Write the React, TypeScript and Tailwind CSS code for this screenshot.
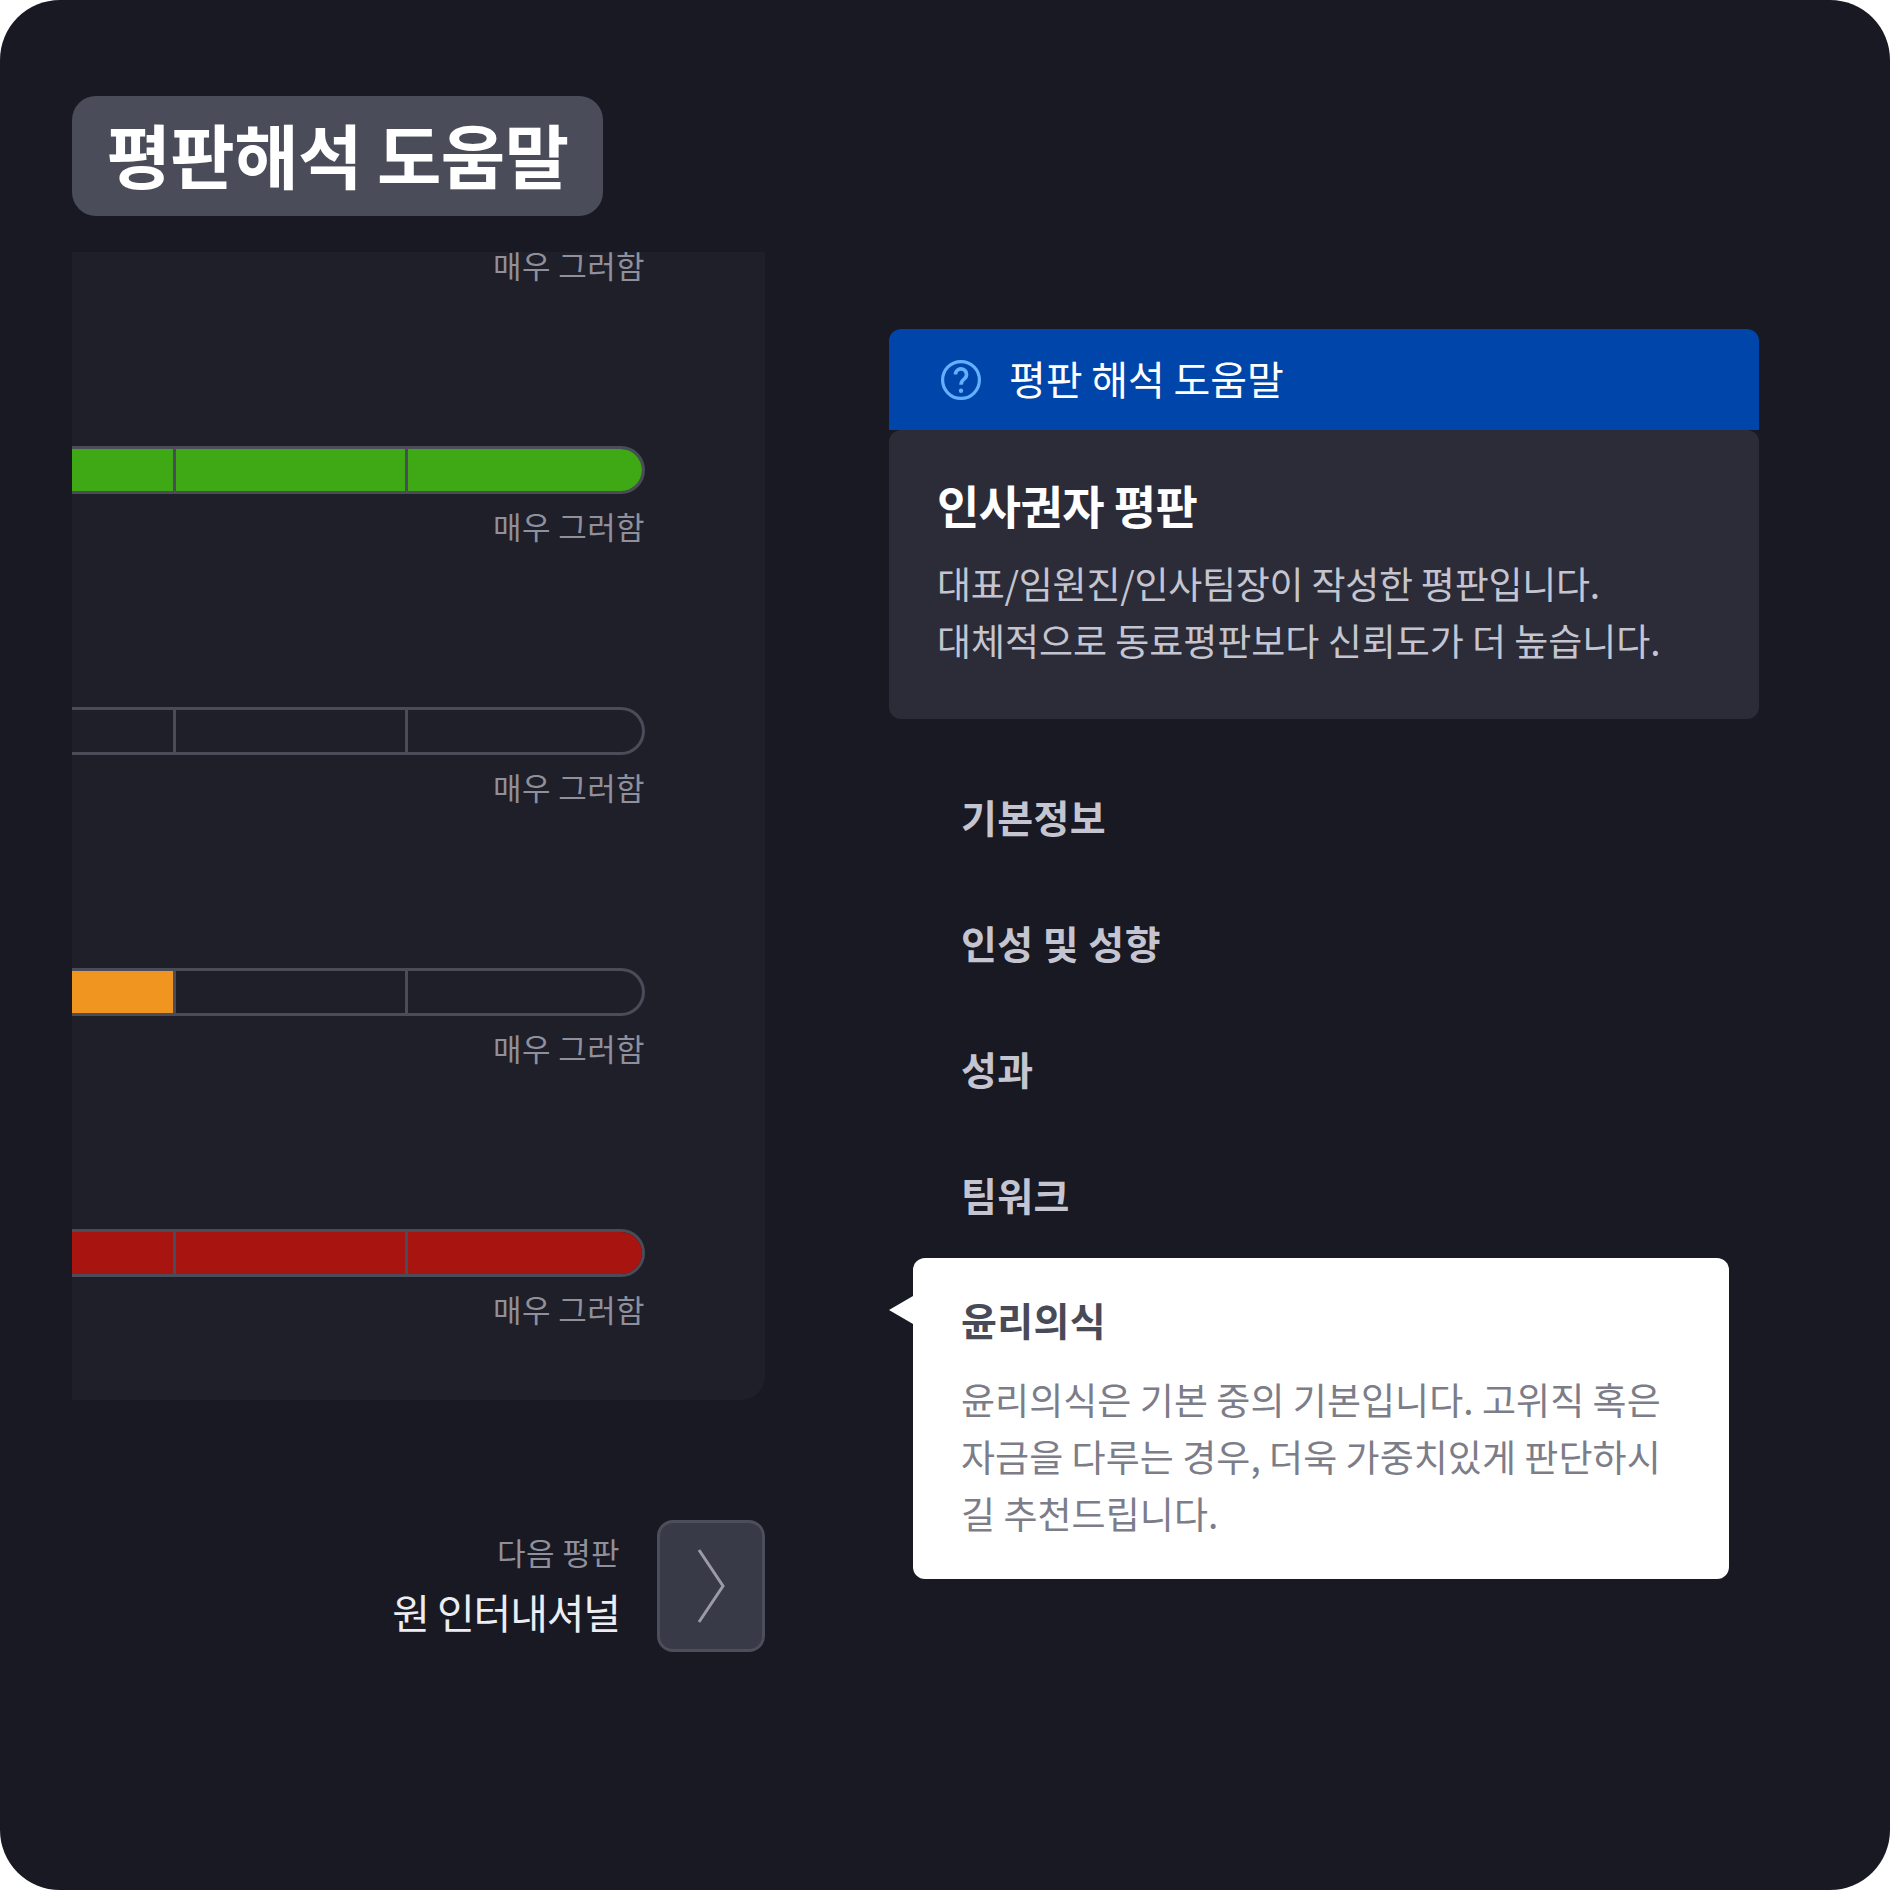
const FONT = "font-['Noto_Sans_CJK_KR','Noto_Sans',sans-serif]"

const bars = [
  { fill: "bg-[#3ea815]", count: 3 },
  { fill: "", count: 0 },
  { fill: "bg-[#f09620]", count: 1 },
  { fill: "bg-[#a8140f]", count: 3 },
]

function Label() {
  return (
    <div className="h-[28px] pr-[1px] text-right text-[31px] leading-[26px] tracking-[0.4px] text-[#8f909c]">
      매우 그러함
    </div>
  )
}

function Bar({ fill, count }: { fill: string; count: number }) {
  return (
    <div className="flex h-[48px] w-[573px] overflow-hidden rounded-r-full border-y-[3px] border-r-[3px] border-[#4a4c5a]">
      <div className={`w-[104px] border-r-[3px] border-[#4a4c5a] ${count > 0 ? fill : ""}`} />
      <div className={`w-[232px] border-r-[3px] border-[#4a4c5a] ${count > 1 ? fill : ""}`} />
      <div className={`flex-1 ${count > 2 ? fill : ""}`} />
    </div>
  )
}

function MenuItem({ title }: { title: string }) {
  return <div className="h-[126px] pl-[72px] pt-[40px] text-[39px] leading-[42px] font-bold tracking-[0.4px] text-[#c4c5d0]">{title}</div>
}

function HelpIcon() {
  return (
    <svg width="40" height="40" viewBox="0 0 40 40" fill="none" stroke="#62b0ff" strokeWidth="3.2" className="mt-[4px] shrink-0">
      <circle cx="20" cy="20" r="18.4" />
      <path d="M14.5 14.5a5.5 5.5 0 1 1 9 4.2c-2.3 1.8-3.5 2.8-3.5 6" strokeWidth="3.6" />
      <circle cx="20" cy="30.8" r="2.2" fill="#62b0ff" stroke="none" />
    </svg>
  )
}

export default function App() {
  return (
    <div className="h-[1890px] w-[1890px] bg-white">
      <div className={`flex h-full w-full rounded-[60px] bg-[#181923] pl-[72px] pt-[96px] ${FONT}`}>
        {/* left side */}
        <div className="w-[693px]">
          <div className="flex h-[120px] w-[531px] items-center justify-center rounded-[24px] bg-[#4a4c5a] pb-[4px] text-[70px] leading-none font-bold tracking-[-0.6px] text-white">
            평판해석 도움말
          </div>
          <div className="mt-[36px] h-[1148px] rounded-br-[24px] bg-[#1e1f29] pb-[76px] pr-[119px]">
            <Label />
            {bars.map((b, i) => (
              <div key={i} className="mt-[166px]">
                <Bar fill={b.fill} count={b.count} />
                <div className="mt-[19px]">
                  <Label />
                </div>
              </div>
            ))}
          </div>
          <div className="mt-[120px] flex items-center justify-end gap-[37px]">
            <div className="text-right">
              <div className="text-[31px] leading-[34px] tracking-[0.4px] text-[#8f909c]">다음 평판</div>
              <div className="mt-[16px] text-[41px] leading-[52px] tracking-[-1.1px] text-[#ecedf2]">원 인터내셔널</div>
            </div>
            <div className="flex h-[132px] w-[108px] items-center justify-center rounded-[16px] border-[3px] border-[#4d4e5b] bg-[#393a47]">
              <svg width="30" height="76" viewBox="0 0 30 76" fill="none" stroke="#9a9ba6" strokeWidth="3">
                <path d="M3 2 L27 38 L3 74" />
              </svg>
            </div>
          </div>
        </div>

        {/* right side */}
        <div className="ml-[124px] w-[870px] pt-[233px]">
          <div className="flex h-[101px] items-center gap-[28px] rounded-t-[12px] bg-[#0045a9] pb-[4px] pl-[52px] text-[40px] tracking-[-0.1px] text-white">
            <HelpIcon />
            평판 해석 도움말
          </div>
          <div className="h-[289px] rounded-[12px] bg-[#2b2c38] px-[48px] pt-[44px]">
            <div className="text-[46px] leading-[60px] font-bold tracking-[-0.6px] text-white">인사권자 평판</div>
            <div className="mt-[21px] text-[37px] leading-[57px] text-[#c4c5d0]">
              <div className="tracking-[-0.25px]">대표/임원진/인사팀장이 작성한 평판입니다.</div>
              <div className="tracking-[-0.03px]">대체적으로 동료평판보다 신뢰도가 더 높습니다.</div>
            </div>
          </div>

          <div className="mt-[36px]">
            <MenuItem title="기본정보" />
            <MenuItem title="인성 및 성향" />
            <MenuItem title="성과" />
            <MenuItem title="팀워크" />
          </div>

          <div className="relative ml-[24px] mt-[-1px] h-[321px] w-[816px] rounded-[12px] bg-white px-[48px] pt-[38px]">
            <div className="absolute left-[-24px] top-[38px] h-0 w-0 border-y-[14px] border-r-[24px] border-y-transparent border-r-white" />
            <div className="text-[39px] leading-[46px] font-bold tracking-[0.4px] text-[#494a57]">윤리의식</div>
            <div className="mt-[29px] w-[712px] text-[37px] leading-[57px] tracking-[0.05px] text-[#7c7d89]">
              윤리의식은 기본 중의 기본입니다. 고위직 혹은 자금을 다루는 경우, 더욱 가중치있게 판단하시길 추천드립니다.
            </div>
          </div>
        </div>
      </div>
    </div>
  )
}
